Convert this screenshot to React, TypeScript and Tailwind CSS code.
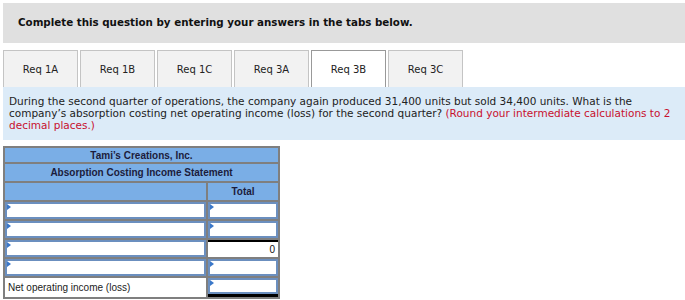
const tabs = ["Req 1A", "Req 1B", "Req 1C", "Req 3A", "Req 3B", "Req 3C"];
const activeTab = "Req 3B";

function Flag() {
  return (
    <span className="absolute left-0 top-0 h-0 w-0 border-y-[3px] border-l-[4px] border-y-transparent border-l-[#3b78c9]" />
  );
}

function InputCell({ text, flag = true }: { text?: string; flag?: boolean }) {
  return (
    <div className="relative h-full border-2 border-[#6b8fbf] bg-white">
      {flag && <Flag />}
      {text}
    </div>
  );
}

const rows = [0, 1, 2, 3];

export default function App() {
  return (
    <div className="h-[300px] w-[685px] bg-white pt-[3px] pl-[3px] font-['DejaVu_Sans',sans-serif] text-[#111]">
      <div className="flex h-[40px] items-center bg-[#e0e0e0] pl-[15px] text-[10.3px] font-bold">
        Complete this question by entering your answers in the tabs below.
      </div>

      <div className="mt-[7px] flex gap-[2px]">
        {tabs.map((t) => (
          <div
            key={t}
            className={
              t === activeTab
                ? "flex h-[37px] w-[75px] items-center justify-center border border-b-0 border-[#999] bg-white text-[10px] text-[#222]"
                : "flex h-[37px] w-[75px] items-center justify-center border border-b-0 border-[#c4c4c4] bg-[#f2f2f2] text-[10px] text-[#222]"
            }
          >
            {t}
          </div>
        ))}
      </div>

      <div className="bg-[#dcebf8] px-[6px] pt-[8px] pb-[9px] text-[10.5px] leading-[12px] text-[#222]">
        During the second quarter of operations, the company again produced 31,400 units but sold 34,400 units. What is the
        company’s absorption costing net operating income (loss) for the second quarter?{" "}
        <span className="text-[#c8102e]">(Round your intermediate calculations to 2 decimal places.)</span>
      </div>

      <div className="mt-[6px] w-[277px] border-2 border-[#7f7f7f] font-['Liberation_Sans',sans-serif] text-[10px]">
        <div className="flex h-[16px] items-center justify-center border-b-2 border-[#7f7f7f] bg-[#7aaee6] font-bold text-[#1c1c3c]">
          Tami’s Creations, Inc.
        </div>
        <div className="flex h-[19px] items-center justify-center border-b-2 border-[#7f7f7f] bg-[#7aaee6] font-bold text-[#1c1c3c]">
          Absorption Costing Income Statement
        </div>
        <div className="grid h-[19px] grid-cols-[203px_1fr] border-b-2 border-[#7f7f7f] bg-[#7aaee6]">
          <div className="border-r-2 border-[#7f7f7f]" />
          <div className="flex items-center justify-center font-bold text-[#1c1c3c]">Total</div>
        </div>
        {rows.map((r) => (
          <div key={r} className="grid h-[19px] grid-cols-[203px_1fr] border-b-2 border-[#7f7f7f]">
            <div className="border-r-2 border-[#7f7f7f]">
              <InputCell />
            </div>
            <div>
              {r === 2 ? (
                <div className="flex h-full items-center justify-end border-t-2 border-black bg-white pr-[3px] text-[10px]">
                  0
                </div>
              ) : (
                <InputCell />
              )}
            </div>
          </div>
        ))}
        <div className="grid h-[19px] grid-cols-[203px_1fr]">
          <div className="flex items-center border-r-2 border-[#7f7f7f] pl-[3px] text-[#222]">
            Net operating income (loss)
          </div>
          <div className="border-b-[3px] border-black">
            <InputCell />
          </div>
        </div>
      </div>
    </div>
  );
}
